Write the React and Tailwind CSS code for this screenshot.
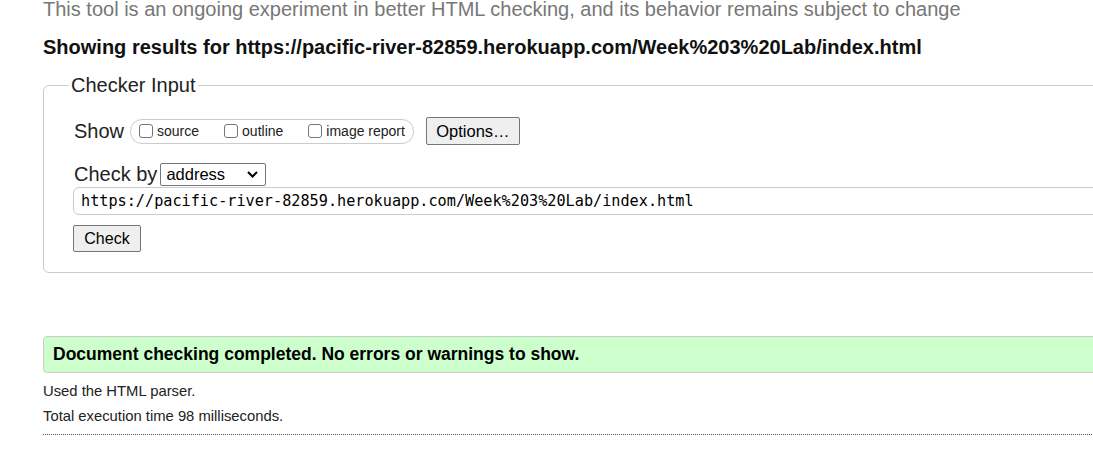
export default function App() {
  const sans = { fontFamily: '"Liberation Sans", Arial, sans-serif' };
  const Box = () => (
    <span className="w-[14px] h-[14px] border border-[#767676] rounded-[3px] bg-white shrink-0"></span>
  );
  return (
    <div className="w-[1093px] h-[455px] overflow-hidden bg-white text-[#222]" style={sans}>
      <div className="w-[1200px] pl-[43px] mt-[-3px]">
        <p className="text-[20px] leading-[24px] text-[#777] whitespace-nowrap">
          This tool is an ongoing experiment in better HTML checking, and its behavior remains subject to change
        </p>
        <p className="mt-[14px] text-[20px] leading-[24px] font-bold text-[#111] whitespace-nowrap">
          Showing results for https://pacific-river-82859.herokuapp.com/Week%203%20Lab/index.html
        </p>
        <fieldset className="mt-[14px] border border-[#ccc] rounded-[6px] pl-[30px] pr-4 pb-[20px] pt-[20px]">
          <legend className="ml-[-5px] px-[2px] text-[20px] leading-[24px] text-[#222]">Checker Input</legend>
          <div className="flex items-center h-[28px]">
            <span className="text-[20px] leading-[24px]">Show</span>
            <div className="ml-[6px] flex items-center h-[25px] border border-[#ccc] rounded-[12px] pl-[8px] pr-[8px] text-[14px]">
              <label className="flex items-center">
                <Box />
                <span className="ml-[4px]">source</span>
              </label>
              <label className="flex items-center ml-[25px]">
                <Box />
                <span className="ml-[4px]">outline</span>
              </label>
              <label className="flex items-center ml-[25px]">
                <Box />
                <span className="ml-[4px]">image report</span>
              </label>
            </div>
            <button className="ml-[12px] h-[28px] w-[94px] border border-[#767676] rounded-[2px] bg-[#efefef] text-[16.5px] text-black">
              Options…
            </button>
          </div>
          <div className="mt-[17px] flex items-center h-[24px]">
            <span className="text-[20px] leading-[24px]">Check by</span>
            <div className="ml-[3px] h-[23px] w-[106px] border border-[#767676] rounded-[2px] flex items-center justify-between pl-[5px] pr-[7px] text-[16.5px] text-black">
              <span>address</span>
              <svg width="11" height="7" viewBox="0 0 11 7"><path d="M1 1 L5.5 5.5 L10 1" fill="none" stroke="#000" strokeWidth="2"/></svg>
            </div>
          </div>
          <div className="mt-[1px] ml-[-1px] h-[28px] border border-[#ccc] rounded-[6px] flex items-center pl-[7px] text-[15.2px] text-black" style={{ fontFamily: '"DejaVu Sans Mono", monospace' }}>
            https://pacific-river-82859.herokuapp.com/Week%203%20Lab/index.html
          </div>
          <button className="mt-[10px] ml-[-1px] h-[27px] w-[68px] border border-[#767676] rounded-[2px] bg-[#efefef] text-[16px] text-black">
            Check
          </button>
        </fieldset>
        <div className="mt-[63px] h-[37px] border border-[#ccc] rounded-[4px] bg-[#ccffcc] flex items-center pl-[9px] text-[17.5px] font-bold text-black">
          Document checking completed. No errors or warnings to show.
        </div>
        <p className="mt-[9px] text-[14.8px] leading-[18px]">Used the HTML parser.</p>
        <p className="mt-[7px] text-[14.8px] leading-[18px]">Total execution time 98 milliseconds.</p>
        <div className="mt-[9px] border-t border-dotted border-[#555]"></div>
      </div>
    </div>
  );
}
